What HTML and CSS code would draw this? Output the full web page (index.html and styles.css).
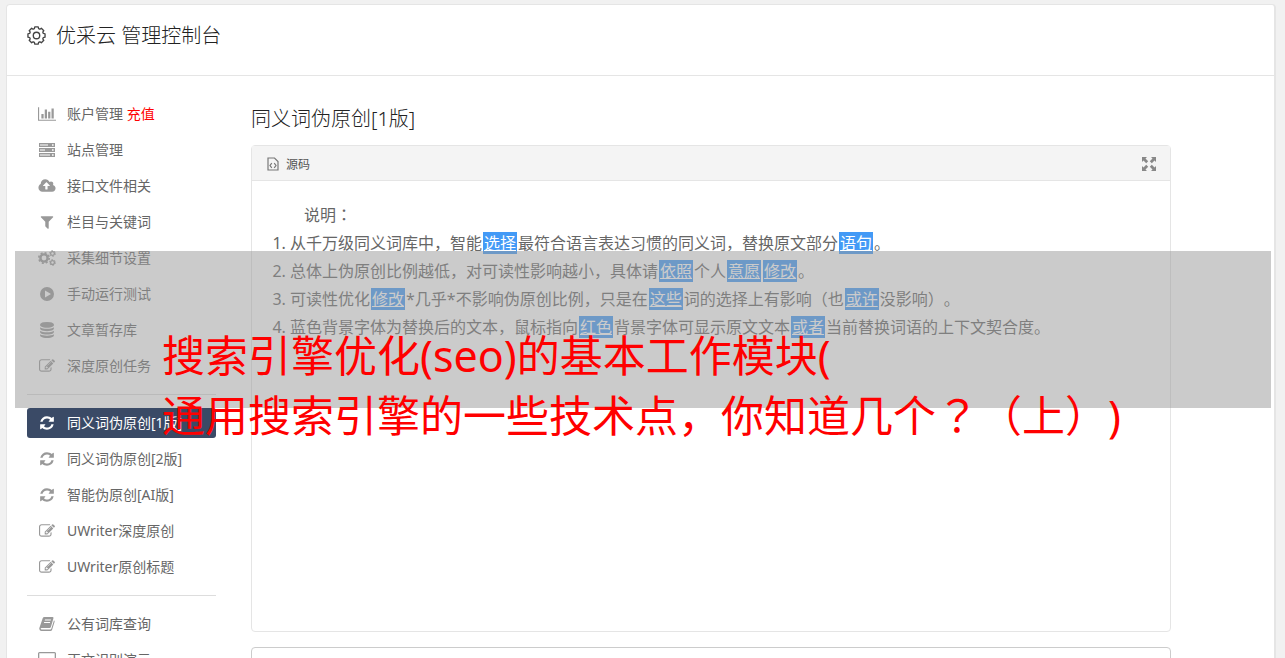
FILE: index.html
```html
<!DOCTYPE html>
<html lang="zh-CN">
<head>
    <meta charset="utf-8">
    <title>优采云 管理控制台</title>
    <link rel="stylesheet" href="styles.css">
</head>
<body>
    <!-- icon set -->
    <svg class="sprite" aria-hidden="true">
        <symbol id="i-chart" viewBox="0 0 2048 1792"><path d="M640 896v512h-256v-512h256zm384-512v1024h-256v-1024h256zm1024 1152v128h-2048v-1536h128v1408h1920zm-640-896v768h-256v-768h256zm384-384v1152h-256v-1152h256z"/></symbol>
        <symbol id="i-server" viewBox="0 0 16 14"><path fill-rule="evenodd" d="M0 0h16v4H0zM1 1.500v1h8v-1zM13 1.200v1.600h1.600V1.200zM0 5h16v4H0zM1 6.500v1h5v-1zM13 6.200v1.600h1.600V6.200zM0 10h16v4H0zM1 11.500v1h10v-1zM13 11.200v1.600h1.600v-1.600z"/></symbol>
        <symbol id="i-cloud" viewBox="0 0 1920 1792"><path d="M1280 864q0-14-9-23l-352-352q-9-9-23-9t-23 9l-351 351q-10 12-10 24 0 14 9 23t23 9h224v352q0 13 9.500 22.500t22.500 9.500h192q13 0 22.500-9.500t9.500-22.500v-352h224q13 0 22.500-9.500t9.500-22.500zm640 288q0 159-112.500 271.500t-271.500 112.500h-1088q-185 0-316.500-131.500t-131.500-316.500q0-130 70-240t188-165q-2-30-2-43 0-212 150-362t362-150q156 0 285.500 87t188.500 231q71-62 166-62 106 0 181 75t75 181q0 76-41 138 130 31 213.500 135.500t83.500 238.500z"/></symbol>
        <symbol id="i-filter" viewBox="0 0 1792 1792"><path d="M1595 295q17 41-14 70l-493 493v742q0 42-39 59-13 5-25 5-27 0-45-19l-256-256q-19-19-19-45v-486l-493-493q-31-29-14-70 17-39 59-39h1280q42 0 59 39z"/></symbol>
        <symbol id="i-cogs" viewBox="0 0 18 16"><g fill="none" stroke="currentColor"><circle cx="6" cy="8" r="3.600" stroke-width="2.400"/><circle cx="6" cy="8" r="5.200" stroke-width="1.600" stroke-dasharray="2.040 2.040"/><circle cx="14.500" cy="3.500" r="1.900" stroke-width="1.300"/><circle cx="14.500" cy="3.500" r="2.900" stroke-width="1" stroke-dasharray="1.520 1.520"/><circle cx="14.500" cy="12.500" r="1.900" stroke-width="1.300"/><circle cx="14.500" cy="12.500" r="2.900" stroke-width="1" stroke-dasharray="1.520 1.520"/></g></symbol>
        <symbol id="i-play" viewBox="0 0 16 16"><path fill-rule="evenodd" d="M8 1a7 7 0 1 0 0 14A7 7 0 0 0 8 1zM6 4.500L12 8l-6 3.500z"/></symbol>
        <symbol id="i-database" viewBox="0 0 1792 1792"><path d="M896 768q237 0 443-43t325-127v170q0 69-103 128t-280 93.500-385 34.500-385-34.500-280-93.500-103-128v-170q119 84 325 127t443 43zm0 768q237 0 443-43t325-127v170q0 69-103 128t-280 93.500-385 34.500-385-34.500-280-93.500-103-128v-170q119 84 325 127t443 43zm0-384q237 0 443-43t325-127v170q0 69-103 128t-280 93.500-385 34.500-385-34.500-280-93.500-103-128v-170q119 84 325 127t443 43zm0-1152q208 0 385 34.500t280 93.500 103 128v128q0 69-103 128t-280 93.500-385 34.500-385-34.500-280-93.500-103-128v-128q0-69 103-128t280-93.500 385-34.500z"/></symbol>
        <symbol id="i-edit" viewBox="0 0 1792 1792"><path d="M888 1184l116-116-152-152-116 116v56h96v96h56zm440-720q-16-16-33 1l-350 350q-17 17-1 33t33-1l350-350q17-17 1-33zm80 594v190q0 119-84.500 203.500t-203.500 84.500h-832q-119 0-203.500-84.500t-84.500-203.500v-832q0-119 84.500-203.500t203.500-84.500h832q63 0 117 25 15 7 18 23 3 17-9 29l-49 49q-14 14-32 8-23-6-45-6h-832q-66 0-113 47t-47 113v832q0 66 47 113t113 47h832q66 0 113-47t47-113v-126q0-13 9-22l64-64q15-15 35-7t20 29zm-96-738l288 288-672 672h-288v-288zm444 132l-92 92-288-288 92-92q28-28 68-28t68 28l152 152q28 28 28 68t-28 68z"/></symbol>
        <symbol id="i-refresh" viewBox="0 0 1792 1792"><path d="M1639 1056q0 5-1 7-64 268-268 434.500t-478 166.500q-146 0-282.500-55t-243.500-157l-129 129q-19 19-45 19t-45-19-19-45v-448q0-26 19-45t45-19h448q26 0 45 19t19 45-19 45l-137 137q71 66 161 102t187 36q134 0 250-65t186-179q11-17 53-117 8-23 30-23h192q13 0 22.500 9.500t9.500 22.500zm25-800v448q0 26-19 45t-45 19h-448q-26 0-45-19t-19-45 19-45l138-138q-148-137-349-137-134 0-250 65t-186 179q-11 17-53 117-8 23-30 23h-199q-13 0-22.500-9.500t-9.500-22.500v-7q65-268 270-434.500t480-166.500q146 0 284 55.500t245 156.500l130-129q19-19 45-19t45 19 19 45z"/></symbol>
        <symbol id="i-book" viewBox="0 0 16 16"><path fill-rule="evenodd" d="M5.500 1h8q1.300 0 .9 1.400l-2.600 8.800Q11.500 12 10.600 12H2.500q-1 0-.8.800t1.100.7h8.400q.9 0 1.200-.9L15 4.200q.9.500.6 1.500l-2.500 8q-.4 1.300-1.700 1.300H2.500Q.6 15 .3 13q-.1-.8.200-1.500L3.700 2.200Q4.100 1 5.500 1zM6 3.600l-.3 1h6l.3-1zM5.200 6l-.3 1h6l.3-1z"/></symbol>
        <symbol id="i-screen" viewBox="0 0 18 16"><path fill-rule="evenodd" d="M1.500 0h15Q18 0 18 1.500v10q0 1.500-1.500 1.500H11v2h2v1H5v-1h2v-2H1.500Q0 13 0 11.500v-10Q0 0 1.500 0zM1.300 1.300v10.200h15.400V1.300z"/></symbol>
    </svg>

    <div class="card">
        <header class="card_head">
            <svg class="gear" viewBox="-10 -10 20 20" aria-hidden="true">
                <path d="M-2.200-7.200L-1.800-9H1.800L2.200-7.200L3.600-6.600L5.100-7.700L7.700-5.100L6.600-3.600L7.200-2.200L9-1.800V1.800L7.200 2.200L6.600 3.600L7.700 5.100L5.100 7.700L3.600 6.600L2.200 7.200L1.800 9H-1.800L-2.200 7.200L-3.600 6.600L-5.100 7.700L-7.700 5.100L-6.600 3.600L-7.200 2.200L-9 1.800V-1.800L-7.200-2.200L-6.600-3.600L-7.700-5.100L-5.100-7.700L-3.600-6.600z"/>
                <circle r="3.400"/>
            </svg>
            <h1>优采云 管理控制台</h1>
        </header>

        <div class="layout">
            <nav class="side">
                <div class="side_group">
                    <a href="#"><svg class="icon wide"><use href="#i-chart"/></svg><span>账户管理 <b>充值</b></span></a>
                    <a href="#"><svg class="icon"><use href="#i-server"/></svg>站点管理</a>
                    <a href="#"><svg class="icon wide"><use href="#i-cloud"/></svg>接口文件相关</a>
                    <a href="#"><svg class="icon"><use href="#i-filter"/></svg>栏目与关键词</a>
                    <a href="#"><svg class="icon wide"><use href="#i-cogs"/></svg>采集细节设置</a>
                    <a href="#"><svg class="icon"><use href="#i-play"/></svg>手动运行测试</a>
                    <a href="#"><svg class="icon"><use href="#i-database"/></svg>文章暂存库</a>
                    <a href="#"><svg class="icon"><use href="#i-edit"/></svg>深度原创任务</a>
                </div>
                <hr>
                <div class="side_group">
                    <a href="#" class="active"><svg class="icon"><use href="#i-refresh"/></svg>同义词伪原创[1版]</a>
                    <a href="#"><svg class="icon"><use href="#i-refresh"/></svg>同义词伪原创[2版]</a>
                    <a href="#"><svg class="icon"><use href="#i-refresh"/></svg>智能伪原创[AI版]</a>
                    <a href="#"><svg class="icon"><use href="#i-edit"/></svg>UWriter深度原创</a>
                    <a href="#"><svg class="icon"><use href="#i-edit"/></svg>UWriter原创标题</a>
                </div>
                <hr>
                <div class="side_group">
                    <a href="#"><svg class="icon"><use href="#i-book"/></svg>公有词库查询</a>
                    <a href="#"><svg class="icon wide"><use href="#i-screen"/></svg>正文识别演示</a>
                </div>
            </nav>

            <main class="main">
                <h2>同义词伪原创[1版]</h2>
                <section class="editor">
                    <div class="toolbar">
                        <button type="button">
                            <svg class="source" viewBox="0 0 12 14" aria-hidden="true"><path d="M1 1h6.500L11 4.500V13H1zM4.800 6.200L3 8.500l1.800 2.300M7.200 6.200L9 8.500l-1.800 2.300"/></svg>
                            源码
                        </button>
                        <button type="button" aria-label="全屏">
                            <svg class="expand" viewBox="0 0 14 14" aria-hidden="true"><path d="M0 0h5L3.500 1.500l2.700 2.700-2 2-2.700-2.700L0 5zM14 0v5l-1.500-1.500-2.700 2.700-2-2 2.700-2.700L9 0zM0 14V9l1.500 1.500 2.700-2.700 2 2-2.700 2.700L5 14zM14 14H9l1.500-1.500-2.700-2.700 2-2 2.700 2.700L14 9z"/></svg>
                        </button>
                    </div>
                    <div class="content">
                        <p>说明<span class="mid" lang="zh-TW">：</span></p>
                        <ol>
                            <li>从千万级同义词库中，智能<u>选择</u>最符合语言表达习惯的同义词，替换原文部分<u>语句</u>。</li>
                            <li>总体上伪原创比例越低，对可读性影响越小，具体请<u>依照</u>个人<u>意愿</u><u>修改</u>。</li>
                            <li>可读性优化<u>修改</u>*几乎*不影响伪原创比例，只是在<u>这些</u>词的选择上有影响（也<u>或许</u>没影响）。</li>
                            <li>蓝色背景字体为替换后的文本，鼠标指向<u>红色</u>背景字体可显示原文文本<u>或者</u>当前替换词语的上下文契合度。</li>
                        </ol>
                    </div>
                </section>
                <textarea class="result" aria-label="原文"></textarea>
            </main>
        </div>
    </div>

    <div class="banner">搜索引擎优化(seo)的基本工作模块(<br>通用搜索引擎的一些技术点，你知道几个<span class="mid" lang="zh-TW">？</span>（上）)</div>
</body>
</html>
```
FILE: styles.css
```css
* {
    box-sizing: border-box;
}
html {
    height: 100%;
    overflow: hidden;
}
body {
    height: 100%;
    margin: 0;
    padding: 4px 9px 0 6px;
    overflow: hidden;
    position: relative;
    background: #f1f1f1;
    color: #666;
    font-family: "Noto Sans", "Noto Sans CJK SC", sans-serif;
    font-size: 14px;
    text-spacing-trim: space-all;
}
h1, h2 {
    margin: 0;
    font-size: 20px;
    font-weight: 300;
    line-height: 30px;
    color: #222;
}
.sprite {
    position: absolute;
    width: 0;
    height: 0;
}
/* centred full-width punctuation */
.mid {
    font-family: "Noto Sans CJK TC", sans-serif;
    line-height: 1;
}
.card {
    background: #fff;
    border: 1px solid #e5e5e5;
    border-right-width: 2px;
    border-radius: 4px;
}
.card_head {
    display: flex;
    align-items: center;
    gap: 10px;
    height: 71px;
    padding: 0 20px 9px;
    border-bottom: 1px solid #e5e5e5;
}
.gear {
    width: 19px;
    height: 19px;
    fill: none;
    stroke: #444;
    stroke-width: 1.4;
    stroke-linejoin: round;
}

/* left menu */
.layout {
    display: grid;
    grid-template-columns: 189px 1fr;
    gap: 35px;
    padding: 23px 103px 20px 20px;
}
.side_group {
    display: flex;
    flex-direction: column;
    gap: 6px;
}
.side a {
    display: flex;
    align-items: center;
    gap: 10px;
    height: 30px;
    padding: 0 10px 2px;
    border-radius: 3px;
    color: #666;
    text-decoration: none;
    white-space: nowrap;
}
.side a b {
    font-weight: normal;
    color: #f00;
}
.side .active {
    background: #3a4a66;
    color: #fff;
}
.side hr {
    height: 1px;
    margin: 13px 0;
    border: 0;
    background: #ddd;
}
.icon {
    width: 16px;
    height: 16px;
    margin: 2px 2px 0;
    fill: currentColor;
    color: #999;
}
.icon.wide {
    width: 18px;
    margin: 2px 1px 0;
}
.active .icon {
    color: #fff;
}

/* editor */
.main {
    padding-top: 5px;
}
.editor {
    margin-top: 11px;
    border: 1px solid #e5e5e5;
    border-radius: 4px;
}
.toolbar {
    display: flex;
    justify-content: space-between;
    align-items: center;
    height: 35px;
    padding: 2px 14px 0;
    background: #f4f4f4;
    border-bottom: 1px solid #e5e5e5;
}
.toolbar button {
    display: flex;
    align-items: center;
    gap: 6px;
    padding: 0;
    border: 0;
    background: none;
    color: #555;
    font-family: inherit;
    font-size: 12px;
}
.source {
    width: 14px;
    height: 14px;
    fill: none;
    stroke: #777;
    stroke-width: 1.2;
}
.expand {
    width: 14px;
    height: 14px;
    fill: #888;
}
.content {
    min-height: 450px;
    padding: 20px;
    font-size: 16px;
    line-height: 28px;
}
.content p {
    margin: 0;
    text-indent: 2em;
}
.content ol {
    margin: 0;
    padding-left: 18px;
}
.content u {
    margin: 0 1px;
    padding: 0 1px;
    background: #439af6;
    color: #fff;
}
.result {
    display: block;
    width: 100%;
    height: 200px;
    margin-top: 15px;
    border: 1px solid #ccc;
    border-radius: 4px;
    resize: none;
}

/* caption strip over the page */
.banner {
    position: absolute;
    top: 251px;
    left: 15px;
    right: 14px;
    height: 157px;
    padding: 75px 147px 0;
    background: rgba(151, 151, 151, 0.5);
    color: #f00;
    font-size: 43px;
    line-height: 60px;
    white-space: nowrap;
}
```
